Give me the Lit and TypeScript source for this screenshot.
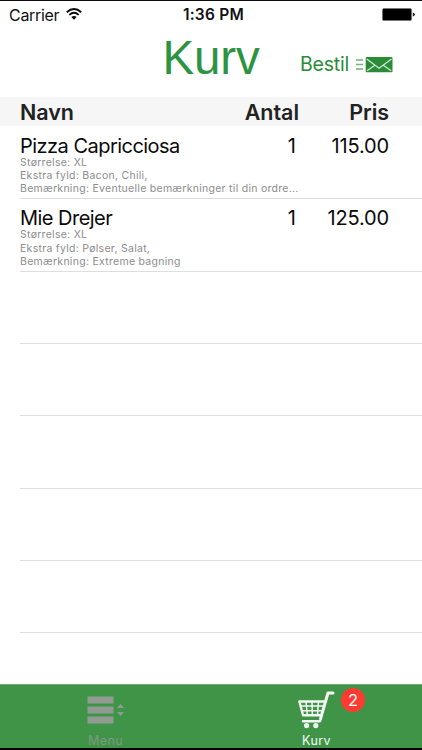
import { LitElement, html, css } from "lit";
import { customElement } from "lit/decorators.js";

interface CartItem {
  name: string;
  count: number;
  price: string;
  notes: string[];
}

const items: CartItem[] = [
  {
    name: "Pizza Capricciosa",
    count: 1,
    price: "115.00",
    notes: ["Størrelse: XL", "Ekstra fyld: Bacon, Chili,", "Bemærkning: Eventuelle bemærkninger til din ordre..."],
  },
  {
    name: "Mie Drejer",
    count: 1,
    price: "125.00",
    notes: ["Størrelse: XL", "Ekstra fyld: Pølser, Salat,", "Bemærkning: Extreme bagning"],
  },
];

@customElement("status-bar")
class StatusBar extends LitElement {
  static styles = css`
    :host { display: grid; grid-template-columns: 1fr auto 1fr; height: 28px; line-height: 28px; padding: 0 7px 0 9px; font-size: 16px; color: #111; }
    .left { display: flex; align-items: center; gap: 7px; letter-spacing: -0.3px; }
    .time { font-weight: 600; font-size: 15.5px; letter-spacing: 0.25px; margin-left: 3px; }
    .right { display: flex; align-items: center; justify-content: flex-end; padding-bottom: 2px; }
    svg { display: block; }
    .wifi { margin-bottom: 2px; }
  `;
  render() {
    return html`
      <div class="left">
        <span>Carrier</span>
        <svg class="wifi" width="16" height="12" viewBox="0 0 16 12">
          <g fill="none" stroke="#0a0a0a" stroke-width="1.9">
            <path d="M.8 4.2Q8-2.2 15.2 4.2" />
            <path d="M3.3 6.9Q8 2.8 12.7 6.9" />
          </g>
          <path d="M5.3 9Q8 6.8 10.7 9L8 11.7z" fill="#0a0a0a" />
        </svg>
      </div>
      <div class="time">1:36 PM</div>
      <div class="right">
        <svg width="33" height="13" viewBox="0 0 33 13">
          <rect x=".4" y=".4" width="29.2" height="12.2" rx="1.6" fill="#000" stroke="#777" stroke-width=".8" />
          <path d="M30.8 4.5q2 .5 2 2t-2 2z" fill="#222" />
        </svg>
      </div>
    `;
  }
}

@customElement("title-bar")
class TitleBar extends LitElement {
  static styles = css`
    :host { display: grid; grid-template-columns: 1fr auto 1fr; height: 68px; color: #2c9441; }
    .title { font: 47.5px/58px "Liberation Sans", Arial, sans-serif; letter-spacing: -0.2px; grid-column: 2; }
    .order { display: flex; align-items: center; justify-content: flex-end; gap: 6px; height: 32px; margin-top: 19px; padding-right: 29px; font-size: 19.5px; letter-spacing: -0.2px; color: #2b8c38; }
    svg { display: block; }
  `;
  render() {
    return html`
      <div class="title">Kurv</div>
      <div class="order">
        <span>Bestil</span>
        <svg width="38" height="17" viewBox="0 0 38 17">
          <path d="M1 4h7M1 8.5h7M1 13h7" stroke="#74b37c" stroke-width="1.5" />
          <rect x="10.7" y=".9" width="26.8" height="15.4" rx="1" fill="#2b8c38" />
          <path d="M11.7 3 24 12.3 36.5 3M12 14.7l8.3-5.6M36.2 14.7l-8.3-5.6" fill="none" stroke="#d5ead8" stroke-width="1.2" />
        </svg>
      </div>
    `;
  }
}

@customElement("cart-list")
class CartList extends LitElement {
  static styles = css`
    :host { display: block; flex: 1; }
    .head, .row { display: grid; grid-template-columns: 1fr 80px 90px; padding-right: 33px; }
    .head { height: 29px; line-height: 30px; background: #f6f6f6; padding-left: 20px; margin-bottom: 1px; font-size: 21.5px; letter-spacing: -0.05px; font-weight: 600; color: #222; }
    .num { text-align: right; }
    .row { height: 72.35px; box-sizing: border-box; margin-left: 20px; padding-top: 9px; border-bottom: 1px solid #dedede; grid-template-rows: 20px 13.2px 13.2px 13.2px; font-size: 20px; line-height: 20px; color: #0a0a0a; }
    .name { letter-spacing: -0.53px; white-space: nowrap; }
    .price { letter-spacing: -0.15px; }
    .row .count { padding-right: 3px; }
    .note { grid-column: 1 / -1; font-size: 10.5px; line-height: 13.2px; letter-spacing: 0.28px; color: #8d8d8d; white-space: nowrap; }
  `;
  render() {
    return html`
      <div class="head"><span>Navn</span><span class="num">Antal</span><span class="num">Pris</span></div>
      ${items.map(
        (item) => html`<div class="row">
          <span class="name">${item.name}</span><span class="num count">${item.count}</span><span class="num price">${item.price}</span>
          ${item.notes.map((note) => html`<span class="note">${note}</span>`)}
        </div>`
      )}
      ${[0, 1, 2, 3, 4].map(() => html`<div class="row"></div>`)}
    `;
  }
}

@customElement("tab-bar")
class TabBar extends LitElement {
  static styles = css`
    :host { display: grid; grid-template-columns: 1fr 1fr; height: 64px; box-sizing: border-box; border-top: 1px solid #72a979; background: #3f9448; }
    .tab { display: flex; flex-direction: column; align-items: center; position: relative; padding-top: 6px; font-size: 12.5px; line-height: 16px; letter-spacing: 0.4px; color: #7f9882; }
    .active { color: #f4faf4; }
    .icon { height: 42px; display: block; }
    .badge { position: absolute; left: 130px; top: 3px; width: 24px; height: 24px; border-radius: 50%; background: #fd3b31; color: #fff; font-size: 16.5px; line-height: 24px; text-align: center; letter-spacing: 0; }
  `;
  render() {
    return html`
      <div class="tab">
        <svg class="icon" width="38" height="42" viewBox="0 0 38 42">
          <path d="M.5 5.5h26v7h-26zM.5 15.5h26v7h-26zM.5 25.5h26v7h-26zM30 17l3.5-4 3.5 4zM30 21h7l-3.5 4z" fill="#929b92" />
        </svg>
        <span>Menu</span>
      </div>
      <div class="tab active">
        <svg class="icon" width="38" height="42" viewBox="0 0 38 42" fill="none" stroke="#f4faf4" stroke-linecap="round" stroke-linejoin="round">
          <path d="M35 2H30L22.7 27.2" stroke-width="3" />
          <path d="M1.4 10.5H27M1.4 10.5L5 24.3H23" stroke-width="2.4" />
          <path d="M2.7 15H26M4 19.7H25M8 11l1.3 13M14 11l.4 13M20.4 11l-.9 13" stroke-width="1.5" />
          <path d="M5 30.2H22L23 27.4" stroke-width="2.5" />
          <circle cx="8.6" cy="34.6" r="2.6" fill="#f4faf4" stroke="none" />
          <circle cx="17.8" cy="34.6" r="2.6" fill="#f4faf4" stroke="none" />
        </svg>
        <span>Kurv</span>
        <span class="badge">2</span>
      </div>
    `;
  }
}

@customElement("app-root")
class AppRoot extends LitElement {
  static styles = css`
    :host { display: flex; flex-direction: column; width: 422px; height: 750px; box-sizing: border-box; border-top: 1px solid #0c0c0c; border-bottom: 2px solid #000; background: #fff; overflow: hidden; font-family: Inter, "Noto Sans", sans-serif; }
  `;
  render() {
    return html`<status-bar></status-bar><title-bar></title-bar><cart-list></cart-list><tab-bar></tab-bar>`;
  }
}
